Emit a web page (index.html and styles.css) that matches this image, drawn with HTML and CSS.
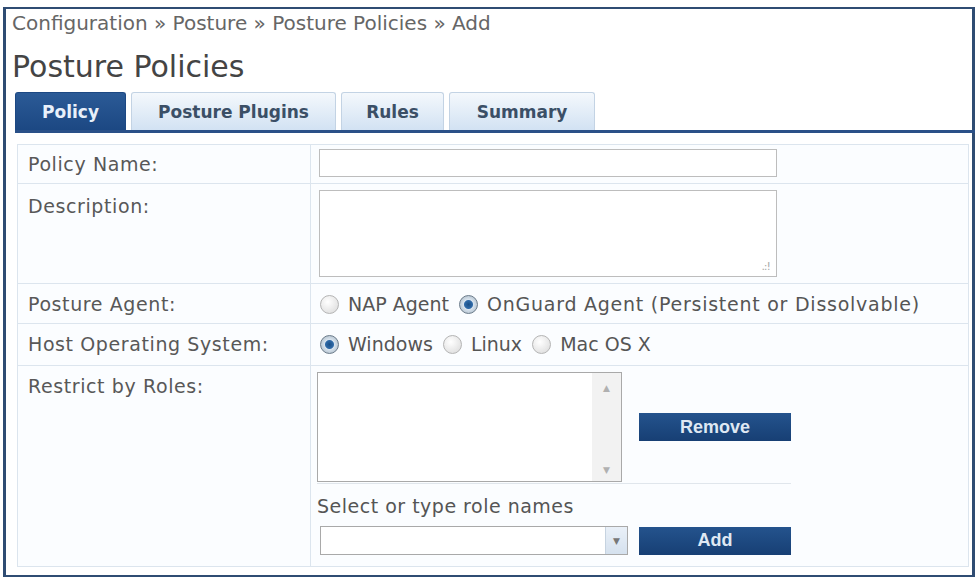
FILE: index.html
```html
<!DOCTYPE html>
<html lang="en">
<head>
    <meta charset="UTF-8">
    <title>Posture Policies</title>
    <link rel="stylesheet" href="styles.css">
</head>
<body>
    <div class="frame">
        <div class="crumbs">Configuration &raquo; Posture &raquo; Posture Policies &raquo; Add</div>
        <h1>Posture Policies</h1>
        <div class="tabs">
            <span class="tab active">Policy</span>
            <span class="tab tab-plugins">Posture Plugins</span>
            <span class="tab tab-rules">Rules</span>
            <span class="tab tab-summary">Summary</span>
        </div>
        <table class="form">
            <tr class="row-name">
                <td class="label">Policy Name:</td>
                <td><input type="text" class="text-input"></td>
            </tr>
            <tr class="row-desc">
                <td class="label">Description:</td>
                <td><div class="textarea"><span class="grip">.:!</span></div></td>
            </tr>
            <tr class="row-agent">
                <td class="label">Posture Agent:</td>
                <td>
                    <label class="opt"><input type="radio" name="agent">NAP Agent</label>
                    <label class="opt opt-wide"><input type="radio" name="agent" checked>OnGuard Agent (Persistent or Dissolvable)</label>
                </td>
            </tr>
            <tr class="row-os">
                <td class="label">Host Operating System:</td>
                <td>
                    <label class="opt"><input type="radio" name="os" checked>Windows</label>
                    <label class="opt"><input type="radio" name="os">Linux</label>
                    <label class="opt"><input type="radio" name="os">Mac OS X</label>
                </td>
            </tr>
            <tr class="row-roles">
                <td class="label">Restrict by Roles:</td>
                <td>
                    <div class="roles-top">
                        <div class="listbox">
                            <div class="list-area"></div>
                            <div class="scroll"><span>&#9650;</span><span>&#9660;</span></div>
                        </div>
                        <button class="btn">Remove</button>
                    </div>
                    <div class="roles-hint">Select or type role names</div>
                    <div class="roles-bottom">
                        <div class="combo">
                            <div class="combo-field"></div>
                            <div class="combo-arrow">&#9660;</div>
                        </div>
                        <button class="btn">Add</button>
                    </div>
                </td>
            </tr>
        </table>
    </div>
</body>
</html>
```

FILE: styles.css
```css
/* Page */
body {
    margin: 0;
    background: #ffffff;
    font-family: "DejaVu Sans", Verdana, sans-serif;
    color: #555;
}
.frame {
    box-sizing: border-box;
    margin: 7px 1px 0 3px;
    height: 570px;
    border: 2px solid #2f4c73;
    border-left-width: 3px;
    border-right-width: 3px;
    padding: 0 0 0 6px;
    background: #fff;
}
.crumbs {
    font-size: 20px;
    color: #666;
    padding-top: 2px;
    line-height: 24px;
}
h1 {
    margin: 14px 0 0;
    font-size: 30px;
    font-weight: normal;
    color: #444;
    line-height: 36px;
}

/* Tabs */
.tabs {
    display: flex;
    gap: 5px;
    margin: 7px -3px 0 3px;
    height: 38px;
    border-bottom: 3px solid #2a5088;
}
.tab {
    display: flex;
    align-items: center;
    justify-content: center;
    box-sizing: border-box;
    height: 38px;
    font-size: 17px;
    font-weight: bold;
    color: #3b4f66;
    background: linear-gradient(#f4f8fc, #d2e2f3);
    border: 1px solid #c3d3e4;
    border-bottom: none;
    border-radius: 3px 3px 0 0;
}
.tab.active {
    width: 111px;
    color: #e8f0fa;
    background: linear-gradient(#2b5a96, #1c4883);
    border-color: #1c4883;
}
.tab-plugins { width: 205px; }
.tab-rules { width: 103px; }
.tab-summary { width: 146px; }

/* Form table */
.form {
    border-collapse: collapse;
    margin: 11px 0 0 5px;
    width: 952px;
    background: #fbfdff;
    border: 1px solid #d6e0ea;
}
.form td {
    border: 1px solid #dce5ee;
    vertical-align: top;
    padding: 0;
}
.form td.label {
    width: 282px;
    padding: 7px 0 0 10px;
    font-size: 19px;
    color: #585858;
    line-height: 24px;
    letter-spacing: 0.6px;
}
.row-name { height: 39px; }
.row-desc { height: 100px; }
.row-agent { height: 40px; }
.row-os { height: 42px; }
.row-roles { height: 201px; }
.row-desc td.label { padding-top: 10px; }
.row-agent td.label,
.row-os td.label { padding-top: 8px; }
.row-roles td.label { padding-top: 8px; }
.row-name td + td { padding: 4px 0 0 8px; }
.row-desc td + td { padding: 6px 0 0 8px; }
.row-agent td + td,
.row-os td + td { padding: 8px 0 0 8px; }
.row-roles td + td { padding: 6px 0 0 6px; }

.text-input {
    box-sizing: border-box;
    width: 458px;
    height: 28px;
    border: 1px solid #bdbdbd;
    margin: 0;
    background: #fff;
    display: block;
}
.textarea {
    box-sizing: border-box;
    width: 458px;
    height: 87px;
    border: 1px solid #bdbdbd;
    background: #fff;
    position: relative;
}
.grip {
    position: absolute;
    right: 6px;
    bottom: 3px;
    font-size: 11px;
    color: #aaa;
    letter-spacing: -1px;
}

/* Radios */
.opt {
    display: inline-flex;
    align-items: center;
    font-size: 19px;
    color: #555;
    margin-right: 4px;
    line-height: 24px;
}
.opt-wide { letter-spacing: 0.75px; }
.opt input {
    appearance: none;
    width: 19px;
    height: 19px;
    margin: 0 9px 0 1px;
    border-radius: 50%;
    border: 1px solid #b5b5b5;
    background: radial-gradient(circle at 40% 35%, #ffffff, #d8d8d8);
}
.opt input:checked {
    border-color: #6d7d8c;
    background: radial-gradient(circle, #1a4f86 0, #2f6aa8 4px, #d7e3ee 5px, #b9c6d2 9px);
}

/* Roles */
.roles-top {
    display: flex;
    align-items: center;
    gap: 17px;
}
.listbox {
    display: flex;
    box-sizing: border-box;
    width: 305px;
    height: 110px;
    border: 1px solid #a9a9a9;
    background: #fff;
}
.list-area { flex: 1; }
.scroll {
    width: 29px;
    background: #f2f2f2;
    display: flex;
    flex-direction: column;
    justify-content: space-between;
    align-items: center;
    padding: 10px 0 6px;
    font-size: 9px;
    color: #b0b0b0;
}
.btn {
    box-sizing: border-box;
    width: 152px;
    height: 28px;
    border: none;
    background: linear-gradient(#24538d, #173f74);
    color: #dfe8f3;
    font-family: "Liberation Sans", Arial, sans-serif;
    font-size: 18px;
    font-weight: bold;
    padding: 0;
}
.roles-hint {
    font-size: 19px;
    color: #555;
    padding: 10px 0 0;
    margin-top: 1px;
    border-top: 1px solid #e0e6ec;
    width: 474px;
    line-height: 24px;
    letter-spacing: 0.5px;
}
.roles-bottom {
    display: flex;
    align-items: center;
    gap: 11px;
    margin-top: 8px;
}
.combo {
    display: flex;
    box-sizing: border-box;
    width: 308px;
    height: 29px;
    border: 1px solid #a9a9a9;
    background: #fff;
    margin-left: 3px;
}
.combo-field { flex: 1; }
.combo-arrow {
    width: 21px;
    background: linear-gradient(#e9f0f8, #d5e1ee);
    border-left: 1px solid #c6d3e0;
    font-size: 9px;
    color: #777;
    display: flex;
    align-items: center;
    justify-content: center;
}
```
